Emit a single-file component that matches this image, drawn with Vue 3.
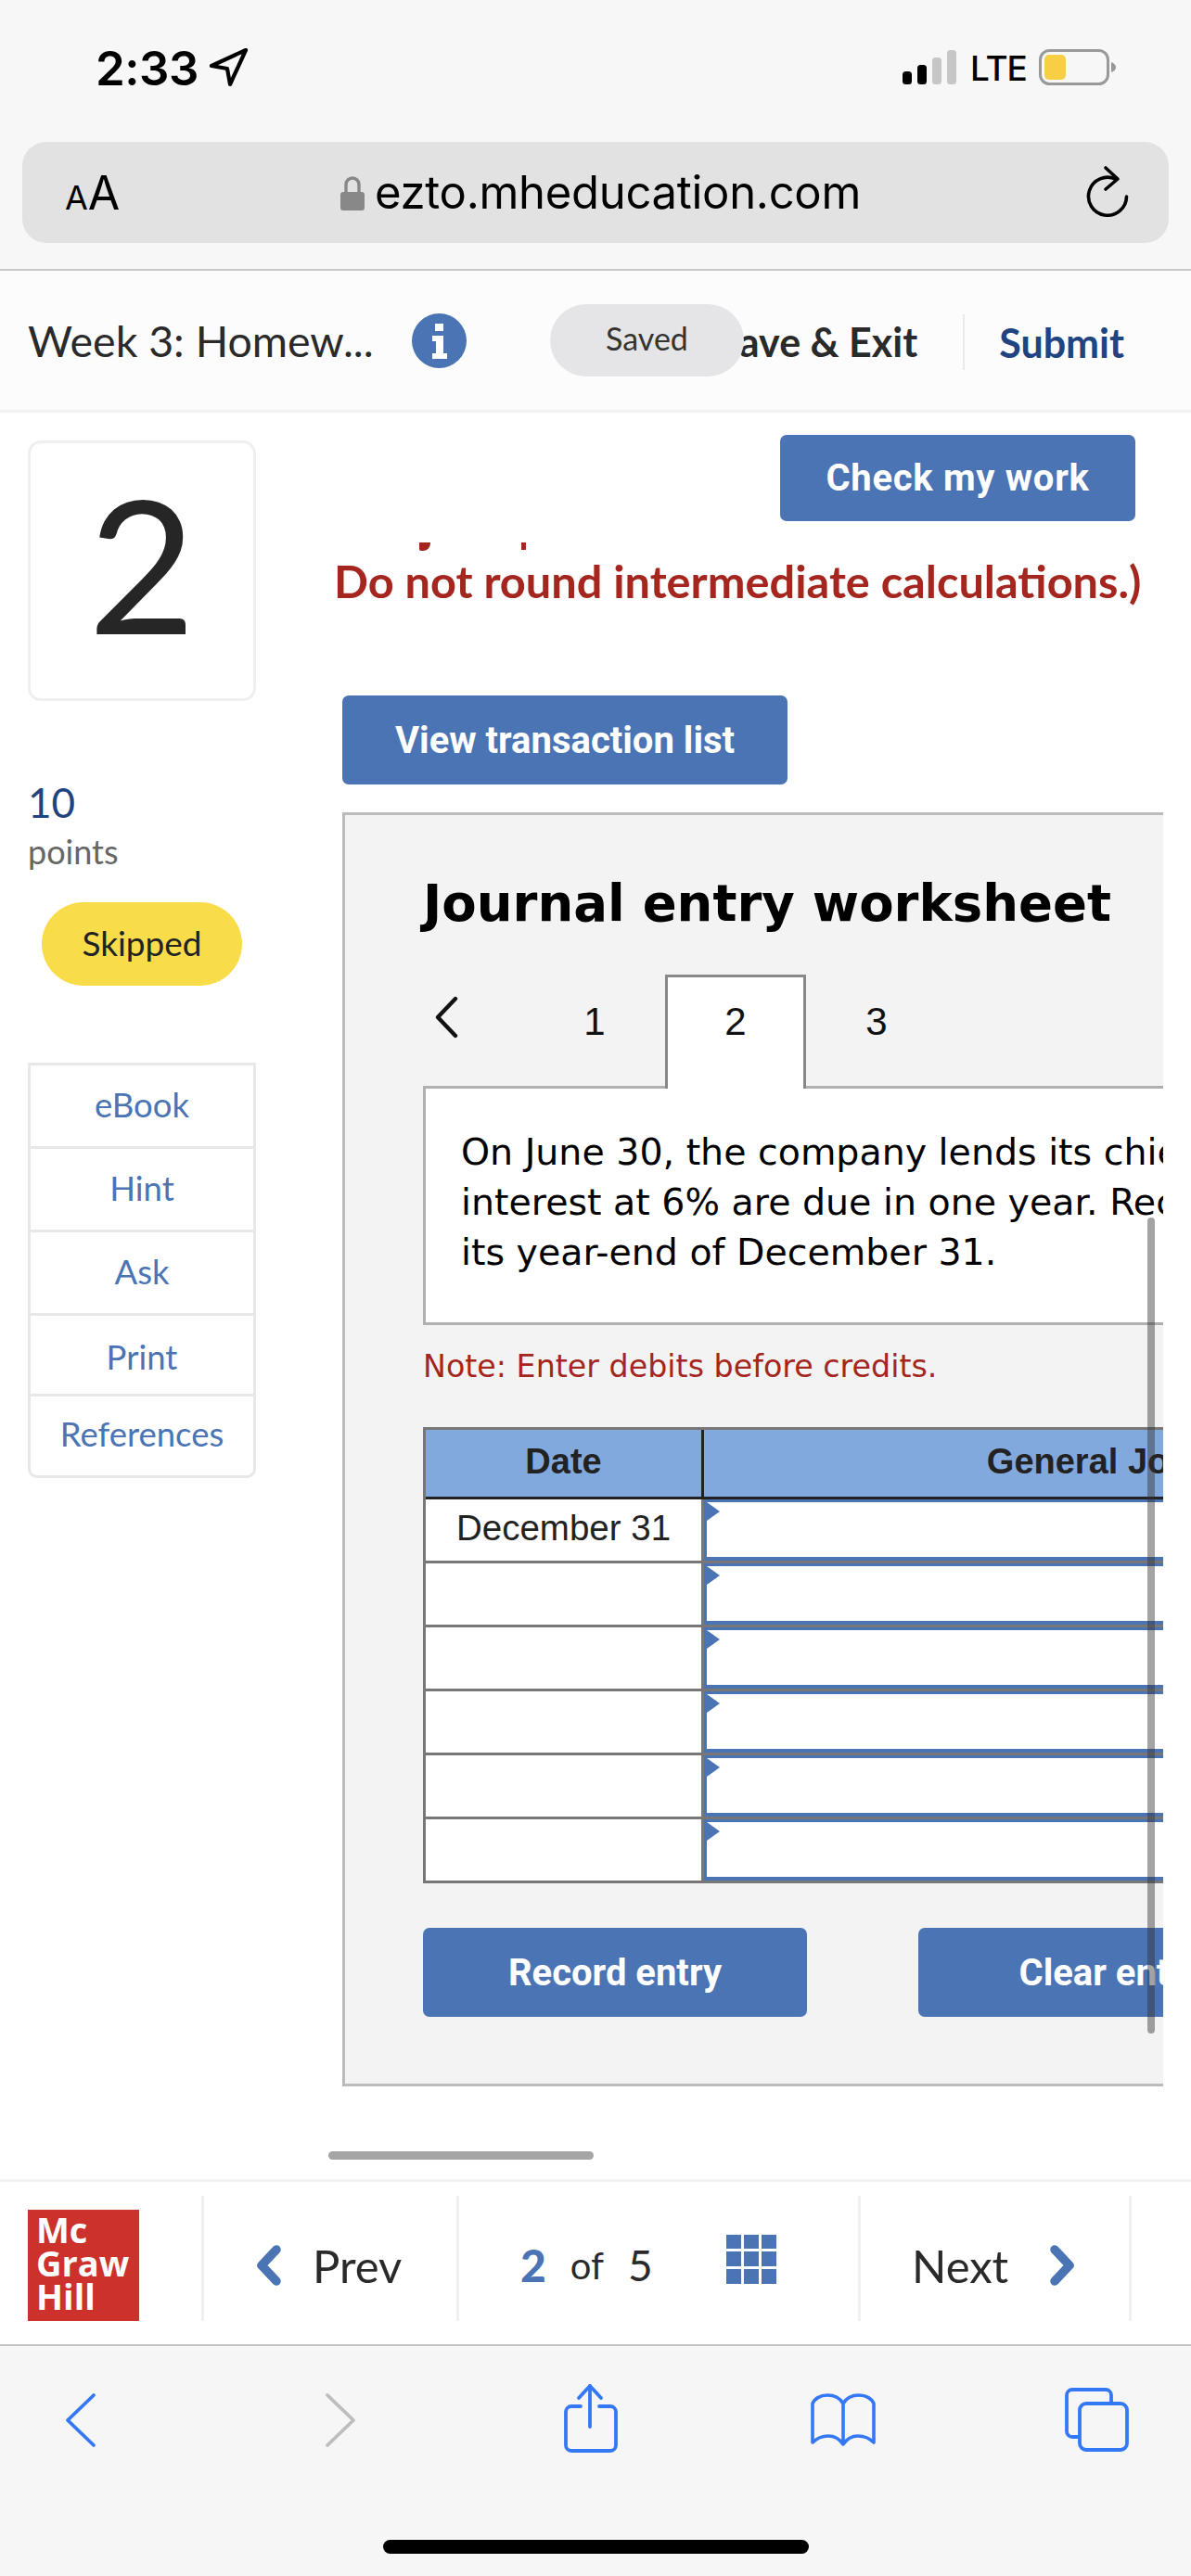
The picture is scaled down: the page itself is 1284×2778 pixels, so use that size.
<template>
  <div class="page">
    <div class="top-bar">
      <div class="status">
        <span class="time">2:33</span>
        <svg class="loc" viewBox="0 0 44 44"><path d="M40 3 L3 20 L20 23 L23 40 Z" fill="none" stroke="#000" stroke-width="4.2" stroke-linejoin="round"/></svg>
        <svg class="signal" viewBox="0 0 58 38">
          <rect x="0" y="23" width="10" height="14" rx="3.5" fill="#000"/>
          <rect x="16" y="16" width="10" height="21" rx="3.5" fill="#000"/>
          <rect x="32" y="8" width="10" height="29" rx="3.5" fill="#c6c6c6"/>
          <rect x="48" y="0" width="10" height="37" rx="3.5" fill="#c6c6c6"/>
        </svg>
        <span class="lte">LTE</span>
        <svg class="battery" viewBox="0 0 84 40">
          <rect x="1.5" y="1.5" width="73" height="36" rx="10" fill="none" stroke="#999" stroke-width="3"/>
          <rect x="6" y="6" width="23" height="27" rx="5" fill="#f6cf45"/>
          <path d="M78 14 Q83 16 83 19.5 Q83 23 78 25 Z" fill="#999"/>
        </svg>
      </div>
      <div class="url-bar">
        <span class="aa"><small>A</small>A</span>
        <svg class="lock" viewBox="0 0 26 38">
          <path d="M6 19 V10 a7 7 0 0 1 14 0 V19" fill="none" stroke="#888" stroke-width="3.4"/>
          <rect x="0" y="18" width="26" height="20" rx="3" fill="#888"/>
        </svg>
        <span class="url">ezto.mheducation.com</span>
        <svg class="reload" viewBox="0 0 50 60">
          <path d="M22 3 L35 15 L22 26" fill="none" stroke="#000" stroke-width="3.6" stroke-linecap="round" stroke-linejoin="round"/>
          <path d="M44.5 34 A20.5 20.5 0 1 1 33 15.3" fill="none" stroke="#000" stroke-width="3.6" stroke-linecap="round"/>
        </svg>
      </div>
    </div>

    <header class="head">
      <span class="head-title">Week 3: Homew...</span>
      <svg class="info" viewBox="0 0 59 59">
        <circle cx="29.5" cy="29.5" r="29.5" fill="#4a74b4"/>
        <rect x="25" y="11" width="9" height="8" fill="#fff"/>
        <path d="M22 24 H34 V43 H38 V49 H22 V43 H26 V30 H22 Z" fill="#fff"/>
      </svg>
      <div class="head-actions">
        <span class="save-exit">Save &amp; Exit</span>
        <span class="submit">Submit</span>
      </div>
      <span class="saved">Saved</span>
    </header>

    <main class="main">
      <aside class="side">
        <div class="q-card">2</div>
        <div class="pts-num">10</div>
        <div class="pts-label">points</div>
        <div class="skipped">Skipped</div>
        <div class="side-links">
          <div v-for="l in links" :key="l" class="side-link">{{ l }}</div>
        </div>
      </aside>

      <section class="content">
        <button class="btn check">Check my work</button>
        <div class="cut-line"><i class="cut-a"></i><i class="cut-b"></i></div>
        <p class="warn">Do not round intermediate calculations.)</p>
        <button class="btn view">View transaction list</button>

        <div class="panel">
          <h2 class="ws-title">Journal entry worksheet</h2>
          <div class="tabs">
            <div class="tab-prev">
              <svg viewBox="0 0 26 46"><path d="M23 3 L4 23 L23 43" fill="none" stroke="#111" stroke-width="4.4" stroke-linecap="round" stroke-linejoin="round"/></svg>
            </div>
            <div v-for="t in tabs" :key="t" class="tab" :class="{ active: t === 2 }">{{ t }}</div>
          </div>
          <div class="desc">
            <div>On June 30, the company lends its chief</div>
            <div>interest at 6% are due in one year. Record</div>
            <div>its year-end of December 31.</div>
          </div>
          <p class="note">Note: Enter debits before credits.</p>

          <div class="table">
            <div class="t-head">
              <div class="th-date">Date</div>
              <div class="th-journal">General Journal</div>
            </div>
            <div v-for="(r, i) in rows" :key="i" class="t-row">
              <div class="td-date">{{ r }}</div>
              <div class="td-journal"><i class="marker"></i></div>
            </div>
          </div>

          <div class="actions">
            <button class="btn record">Record entry</button>
            <button class="btn clear">Clear entry</button>
          </div>
          <div class="v-scroll"></div>
        </div>
      </section>

      <div class="h-scroll"></div>
    </main>

    <nav class="nav">
      <div class="cell cell-logo">
        <div class="logo">Mc<br>Graw<br>Hill</div>
      </div>
      <div class="cell cell-prev">
        <svg class="nav-chev" viewBox="0 0 28 44"><path d="M22 5 L6 22 L22 39" fill="none" stroke="#4a74b4" stroke-width="9.5" stroke-linecap="round" stroke-linejoin="round"/></svg>
        <span>Prev</span>
      </div>
      <div class="cell cell-page">
        <b>2</b><span class="of">of</span><span class="total">5</span>
        <div class="grid-icon"><i v-for="n in 9" :key="n"></i></div>
      </div>
      <div class="cell cell-next">
        <span>Next</span>
        <svg class="nav-chev next-chev" viewBox="0 0 28 44"><path d="M6 5 L22 22 L6 39" fill="none" stroke="#4a74b4" stroke-width="9.5" stroke-linecap="round" stroke-linejoin="round"/></svg>
      </div>
    </nav>

    <div class="safari">
      <div class="tools">
        <svg class="t-back" viewBox="0 0 42 64"><path d="M35 5 L7 32 L35 59" fill="none" stroke="#3478f6" stroke-width="3.8" stroke-linecap="round" stroke-linejoin="round"/></svg>
        <svg class="t-fwd" viewBox="0 0 42 64"><path d="M7 5 L35 32 L7 59" fill="none" stroke="#bdbdbd" stroke-width="3.8" stroke-linecap="round" stroke-linejoin="round"/></svg>
        <svg class="t-share" viewBox="0 0 72 85"><g fill="none" stroke="#3478f6" stroke-width="3.8" stroke-linecap="round" stroke-linejoin="round"><path d="M26 30 H16 a6 6 0 0 0 -6 6 V72 a6 6 0 0 0 6 6 H58 a6 6 0 0 0 6 -6 V36 a6 6 0 0 0 -6 -6 H46"/><path d="M36 52 V8"/><path d="M24 21 L36 8 L48 21"/></g></svg>
        <svg class="t-book" viewBox="0 0 78 70"><path d="M39 17 C35 10 28 8 22 8 C14 8 8 12 6 17 V59 C12 53 18 52 23 52 C30 52 35 55 39 61 C43 55 48 52 55 52 C60 52 66 53 72 59 V17 C70 12 64 8 56 8 C50 8 43 10 39 17 V61" fill="none" stroke="#3478f6" stroke-width="3.6" stroke-linejoin="round" stroke-linecap="round"/></svg>
        <svg class="t-tabs" viewBox="0 0 78 76"><g fill="none" stroke="#3478f6" stroke-width="3.8"><path d="M22 56 H14 a6 6 0 0 1 -6 -6 V11 a6 6 0 0 1 6 -6 H50 a6 6 0 0 1 6 6 V20"/><rect x="22" y="20" width="51" height="50" rx="7"/></g></svg>
      </div>
      <div class="home"></div>
    </div>
  </div>
</template>

<script setup>
const links = ['eBook', 'Hint', 'Ask', 'Print', 'References']
const tabs = [1, 2, 3]
const rows = ['December 31', '', '', '', '', '']
</script>

<style scoped>
.page {
  width: 1284px;
  height: 2778px;
  overflow: hidden;
  display: flex;
  flex-direction: column;
  background: #fff;
  font-family: Lato, "Open Sans", sans-serif;
  color: #2a2a2a;
}

/* ── Browser chrome, top ─────────────────────────────────── */

.top-bar {
  height: 292px;
  flex: none;
  box-sizing: border-box;
  background: #f7f7f7;
  border-bottom: 2px solid #c8c8c8;
}

.status {
  height: 153px;
  padding: 0 0 7px 103px;
  box-sizing: border-box;
  display: flex;
  align-items: center;
  font-family: Inter, sans-serif;
  color: #000;
}

.time {
  font-size: 51px;
  font-weight: 600;
  width: 122px;
  letter-spacing: -0.5px;
}

.loc {
  width: 44px;
  height: 44px;
}

.signal {
  width: 58px;
  height: 38px;
  margin-left: 704px;
}

.lte {
  font-size: 37px;
  font-weight: 500;
  letter-spacing: -1px;
  margin-left: 15px;
  width: 59px;
}

.battery {
  width: 84px;
  height: 40px;
  margin-left: 15px;
}

.url-bar {
  margin: 0 24px;
  height: 109px;
  background: #e2e2e2;
  border-radius: 26px;
  display: flex;
  align-items: center;
  font-family: Inter, sans-serif;
  color: #000;
}

.aa {
  margin-left: 46px;
  width: 60px;
  font-size: 50px;
  line-height: 1;
  white-space: nowrap;
}

.aa small {
  font-size: 36px;
}

.lock {
  width: 26px;
  height: 38px;
  margin-left: 237px;
}

.url {
  margin-left: 11px;
  font-size: 49px;
  letter-spacing: -0.3px;
  white-space: nowrap;
}

.reload {
  width: 50px;
  height: 60px;
  margin-left: auto;
  margin-right: 40px;
}

/* ── Assignment header ───────────────────────────────────── */

.head {
  position: relative;
  height: 153px;
  flex: none;
  box-sizing: border-box;
  padding-left: 30px;
  background: #fcfcfc;
  border-bottom: 3px solid #f2f2f2;
  display: flex;
  align-items: center;
}

.head-title {
  font-size: 46.5px;
  white-space: nowrap;
}

.info {
  width: 59px;
  height: 59px;
  margin-left: 41px;
}

.head-actions {
  margin-left: auto;
  padding-right: 72px;
  display: flex;
  align-items: center;
  margin-top: 4px;
}

.save-exit {
  font-size: 43px;
  font-weight: 700;
  padding-right: 49px;
  height: 60px;
  line-height: 60px;
  border-right: 2px solid #eaeaea;
  white-space: nowrap;
}

.submit {
  font-size: 43px;
  font-weight: 700;
  color: #1f4480;
  margin-left: 37px;
}

.saved {
  position: absolute;
  left: 593px;
  top: 36px;
  width: 209px;
  height: 78px;
  border-radius: 39px;
  background: #e5e4e6;
  text-align: center;
  line-height: 74px;
  font-size: 34px;
  color: #333;
}

/* ── Main area ───────────────────────────────────────────── */

.main {
  position: relative;
  height: 1905px;
  flex: none;
  display: flex;
  overflow: hidden;
}

.side {
  width: 330px;
  flex: none;
  box-sizing: border-box;
  padding: 30px 0 0 30px;
}

.q-card {
  width: 246px;
  height: 281px;
  box-sizing: border-box;
  border: 3px solid #efefef;
  border-radius: 14px;
  text-align: center;
  font-size: 200px;
  line-height: 258px;
  color: #262626;
}

.pts-num {
  margin-top: 83px;
  font-size: 44px;
  line-height: 52px;
  color: #1f4480;
}

.pts-label {
  margin-top: 5px;
  font-size: 36px;
  line-height: 44px;
  color: #666;
}

.skipped {
  margin: 33px 0 0 15px;
  width: 216px;
  height: 90px;
  border-radius: 45px;
  background: #f9dc4a;
  text-align: center;
  line-height: 88px;
  font-size: 37px;
  color: #222;
}

.side-links {
  margin-top: 83px;
  width: 246px;
  box-sizing: border-box;
  border: 3px solid #e8e8e8;
  border-bottom-left-radius: 10px;
  border-bottom-right-radius: 10px;
}

.side-link {
  height: 90px;
  line-height: 84px;
  text-align: center;
  font-size: 36.5px;
  color: #4a74b4;
  border-bottom: 3px solid #e8e8e8;
  box-sizing: border-box;
}

.side-link:nth-child(4) {
  height: 87px;
  line-height: 88px;
}

.side-link:last-child {
  height: 85px;
  line-height: 80px;
  border-bottom: none;
}

.content {
  flex: 1;
  min-width: 0;
  padding: 24px 0 0 30px;
}

.btn {
  display: block;
  border: none;
  padding: 0;
  background: #4a74b4;
  color: #fff;
  font-family: Roboto, sans-serif;
  font-weight: 700;
  font-size: 40px;
  border-radius: 7px;
}

.check {
  margin-left: 481px;
  width: 383px;
  height: 93px;
  letter-spacing: 0.7px;
}

.cut-line {
  position: relative;
  height: 9px;
  margin-top: 23px;
}

.cut-a {
  position: absolute;
  left: 92px;
  top: 0;
  width: 12px;
  height: 9px;
  background: #a5261f;
  border-radius: 0 0 8px 2px;
}

.cut-b {
  position: absolute;
  left: 202px;
  top: 0;
  width: 5px;
  height: 8px;
  background: #a5261f;
}

.warn {
  margin: 7px 0 0;
  font-size: 48.7px;
  line-height: 50px;
  font-weight: 700;
  color: #a5261f;
  white-space: nowrap;
}

.view {
  margin: 99px 0 0 9px;
  width: 480px;
  height: 96px;
}

.panel {
  position: relative;
  margin: 30px 0 0 9px;
  width: 885px;
  height: 1374px;
  box-sizing: border-box;
  padding: 66px 0 0 84px;
  overflow: hidden;
  background: #f3f3f3;
  border: 3px solid #bbb;
  border-right: none;
}

.ws-title {
  margin: 0;
  height: 60px;
  line-height: 58px;
  font-family: "DejaVu Sans", sans-serif;
  font-weight: 700;
  font-size: 54.5px;
  color: #000;
  white-space: nowrap;
}

.tabs {
  margin-top: 46px;
  height: 120px;
  display: flex;
  position: relative;
  z-index: 1;
}

.tab-prev {
  width: 109px;
  padding: 23px 0 0 12px;
  box-sizing: border-box;
}

.tab-prev svg {
  display: block;
  width: 26px;
  height: 46px;
}

.tab {
  width: 152px;
  height: 120px;
  box-sizing: border-box;
  text-align: center;
  font-family: "Liberation Sans", sans-serif;
  font-size: 42px;
  padding-top: 24px;
  line-height: 48px;
  color: #111;
  border: 3px solid transparent;
  border-bottom: none;
}

.tab.active {
  height: 123px;
  background: #fff;
  border-color: #888;
}

.desc {
  width: 1197px;
  height: 258px;
  box-sizing: border-box;
  padding: 41px 0 0 38px;
  background: #fff;
  border: 3px solid #b0b0b0;
  font-family: "DejaVu Sans", sans-serif;
  font-size: 39.5px;
  line-height: 54px;
  color: #000;
  white-space: nowrap;
}

.note {
  margin: 27px 0 0;
  height: 36px;
  line-height: 36px;
  font-family: "DejaVu Sans", sans-serif;
  font-size: 33.3px;
  color: #a5261f;
}

.table {
  margin-top: 47px;
  width: 1197px;
  box-sizing: border-box;
  border: 3px solid #777;
  border-bottom: none;
  font-family: "Liberation Sans", sans-serif;
  color: #222;
}

.t-head {
  display: flex;
  height: 75px;
  box-sizing: border-box;
  background: #82a9de;
  border-bottom: 3px solid #222;
  font-weight: 700;
  font-size: 38px;
  line-height: 68px;
  text-align: center;
}

.th-date {
  width: 297px;
  flex: none;
}

.th-journal {
  flex: 1;
  border-left: 3px solid #222;
  padding-left: 8px;
}

.t-row {
  display: flex;
  height: 69px;
  box-sizing: border-box;
  background: #fff;
  border-bottom: 3px solid #777;
}

.td-date {
  width: 297px;
  flex: none;
  text-align: center;
  font-size: 38.5px;
  line-height: 62px;
}

.td-journal {
  position: relative;
  flex: 1;
  border-left: 3px solid #777;
}

.td-journal::before {
  content: "";
  position: absolute;
  inset: 0;
  border: solid #4a74b4;
  border-width: 3px 0 4px 3px;
}

.marker {
  position: absolute;
  left: 3px;
  top: 3px;
  width: 14px;
  height: 20px;
  background: #4a74b4;
  clip-path: polygon(0 0, 100% 50%, 0 100%);
}

.actions {
  margin-top: 48px;
  display: flex;
  width: 1000px;
}

.record {
  width: 414px;
  height: 96px;
}

.clear {
  margin-left: 120px;
  width: 414px;
  height: 96px;
  flex: none;
}

.v-scroll {
  position: absolute;
  top: 434px;
  right: 9px;
  width: 8px;
  height: 880px;
  border-radius: 4px;
  background: rgba(50, 50, 50, 0.45);
}

.h-scroll {
  position: absolute;
  left: 354px;
  bottom: 21px;
  width: 286px;
  height: 9px;
  border-radius: 5px;
  background: #a5a5a5;
}

/* ── Footer nav ──────────────────────────────────────────── */

.nav {
  height: 180px;
  flex: none;
  box-sizing: border-box;
  padding-top: 15px;
  display: flex;
  align-items: flex-start;
  background: #fff;
  border-top: 3px solid #f2f2f2;
  border-bottom: 2px solid #c4c4c4;
  font-size: 49px;
  color: #2a2a2a;
}

.cell {
  height: 135px;
  box-sizing: border-box;
  display: flex;
  align-items: center;
  flex: none;
  border-right: 3px solid #f0f0f0;
  padding-top: 14px;
}

.cell-logo {
  width: 220px;
  padding: 15px 0 0 30px;
  align-items: flex-start;
}

.logo {
  width: 120px;
  height: 120px;
  box-sizing: border-box;
  padding: 3px 0 0 9px;
  background: #cd312b;
  color: #fff;
  font-family: "Open Sans", sans-serif;
  font-weight: 700;
  font-size: 38px;
  line-height: 36px;
  white-space: nowrap;
}

.nav-chev {
  width: 28px;
  height: 44px;
}

.cell-prev {
  width: 275px;
  padding-left: 56px;
}

.cell-prev span {
  margin-left: 33px;
}

.cell-page {
  width: 433px;
  padding-left: 66px;
  font-size: 46px;
}

.cell-page b {
  color: #4a74b4;
  font-size: 48px;
  font-weight: 900;
}

.of {
  margin-left: 26px;
  font-size: 40px;
}

.total {
  margin-left: 26px;
}

.grid-icon {
  margin: -13px 0 0 79px;
  width: 54px;
  height: 53px;
  display: grid;
  grid-template-columns: repeat(3, 1fr);
  grid-template-rows: repeat(3, 1fr);
  gap: 3px;
}

.grid-icon i {
  background: #4a74b4;
}

.cell-next {
  width: 292px;
  padding-left: 55px;
}

.next-chev {
  margin-left: 44px;
}

/* ── Browser chrome, bottom ──────────────────────────────── */

.safari {
  flex: 1;
  background: #f6f6f6;
}

.tools {
  height: 209px;
  box-sizing: border-box;
  padding-top: 35px;
  display: flex;
  align-items: flex-start;
}

.t-back {
  width: 42px;
  height: 64px;
  margin: 13px 0 0 66px;
}

.t-fwd {
  width: 42px;
  height: 64px;
  margin: 13px 0 0 238px;
}

.t-share {
  width: 72px;
  height: 85px;
  margin-left: 212px;
}

.t-book {
  width: 78px;
  height: 70px;
  margin: 10px 0 0 198px;
}

.t-tabs {
  width: 78px;
  height: 76px;
  margin: 7px 0 0 194px;
}

.home {
  margin-left: 413px;
  width: 459px;
  height: 15px;
  border-radius: 8px;
  background: #000;
}
</style>

<style>
html,
body {
  margin: 0;
  padding: 0;
}
</style>
